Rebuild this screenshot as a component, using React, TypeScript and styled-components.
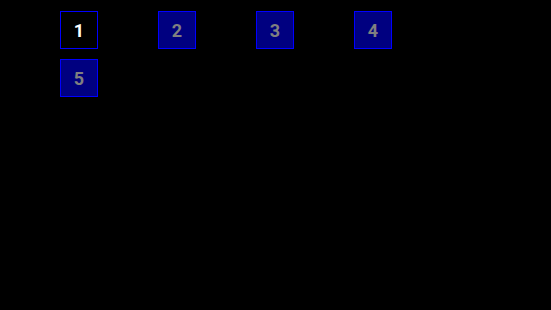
import React from 'react';
import styled, { createGlobalStyle } from 'styled-components';

const GlobalStyle = createGlobalStyle`
    html, body {
        margin: 0;
        padding: 0;
        background: #000000;
        font-family: Roboto, "Liberation Sans", sans-serif;
    }
`

const Page = styled.div`
    width: 551px;
    height: 310px;
    background: #000000;
    box-sizing: border-box;
    padding: 11px 0 0 60px;
`
const Grid = styled.div`
    display: grid;
    grid-template-columns: repeat(4, 38px);
    column-gap: 60px;
    row-gap: 10px;
`
const Tile = styled.div<{ $active?: boolean }>`
    width: 38px;
    height: 38px;
    box-sizing: border-box;
    border: 1px solid #0000ff;
    background: ${props => props.$active ? '#000000' : '#000080'};
    color: ${props => props.$active ? '#ffffff' : '#808080'};
    display: flex;
    align-items: center;
    justify-content: center;
    font-size: 18px;
    font-weight: 700;
`

const pages = [1, 2, 3, 4, 5]

function App() {
    const current = 1
    return (
        <Page>
            <GlobalStyle />
            <Grid>
                {pages.map(n => (
                    <Tile key={n} $active={n === current}>{n}</Tile>
                ))}
            </Grid>
        </Page>
    )
}

export default App;
